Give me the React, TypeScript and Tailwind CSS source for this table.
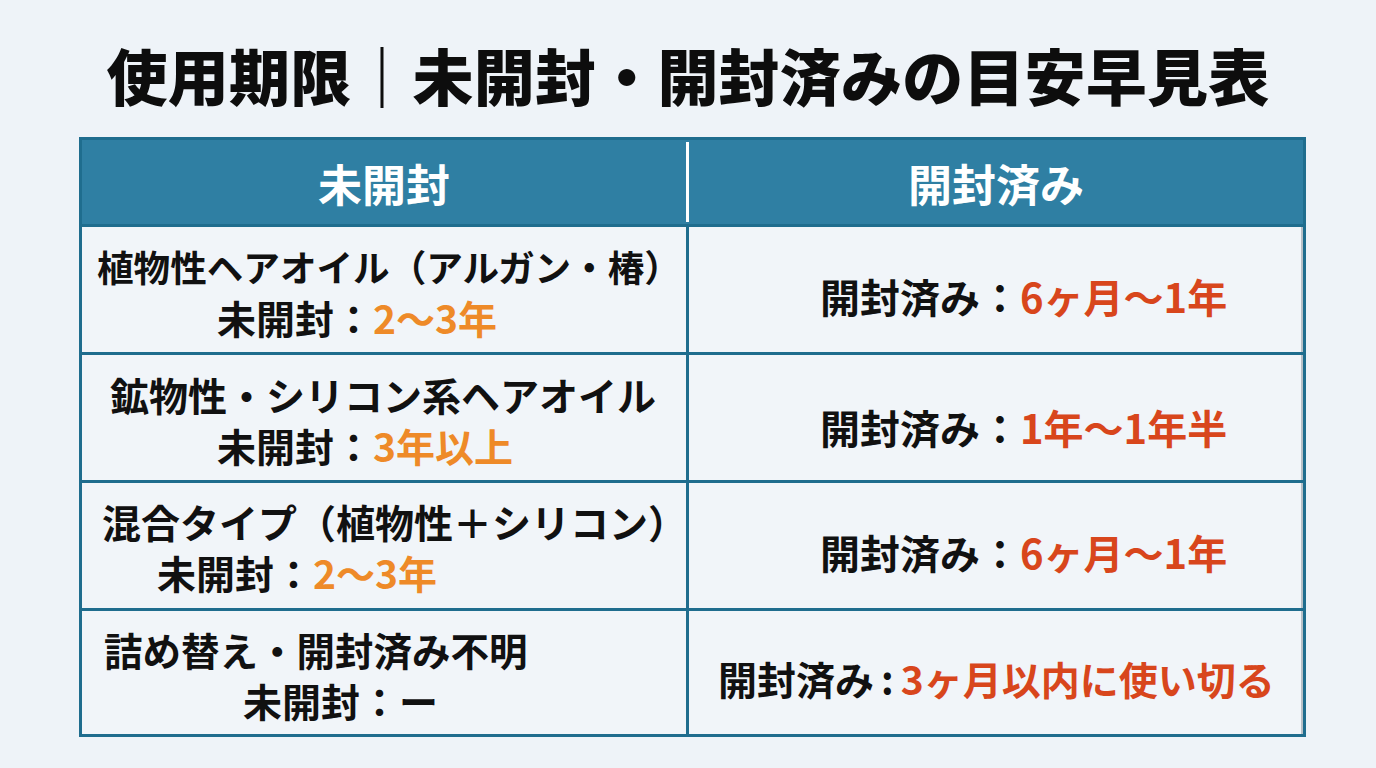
import React from "react";

const FONT = { fontFamily: '"Noto Sans CJK JP", "Noto Sans", sans-serif' };

export default function App() {
  return (
    <div className="min-h-[768px] w-[1376px] bg-[#eef3f8] text-[#111111]" style={FONT}>
      <h1 className="pt-[44px] text-center text-[61px] font-black leading-[61px] tracking-[0.2px] text-[#0d0d0d]">
        使用期限｜未開封・開封済みの目安早見表
      </h1>

      <div className="ml-[79px] mt-[32px] w-[1227px] border-[3px] border-[#1f6d8e]">
        {/* header */}
        <div className="flex h-[84px] bg-[#2f7fa3] text-white">
          <div className="flex w-[604px] items-center justify-center pt-[2px] text-[44px] font-bold leading-none">
            未開封
          </div>
          <div className="my-[2px] w-[3px] bg-white" />
          <div className="flex flex-1 items-center justify-center pt-[2px] text-[44px] font-bold leading-none">
            開封済み
          </div>
        </div>

        {/* body rows */}
        <div className="flex h-[128px] border-t-[3px] border-[#1f6d8e] bg-[#f1f5f9]">
          <div className="flex w-[607px] flex-col justify-center whitespace-nowrap border-r-[3px] border-[#1f6d8e] pt-[5px] font-bold leading-[51px]">
            <div className="pl-[15px] text-[36.6px]">植物性ヘアオイル（アルガン・椿）</div>
            <div className="pl-[135px] text-[39px]">
              未開封：<span className="text-[#ee8a28]">2〜3年</span>
            </div>
          </div>
          <div className="flex flex-1 items-center whitespace-nowrap border-r-2 border-[#b8c0c7] pl-[131px] pt-[12px] text-[40px] font-bold leading-none">
            開封済み：<span className="text-[#d8461c]">6ヶ月〜1年</span>
          </div>
        </div>

        <div className="flex h-[128px] border-t-[3px] border-[#1f6d8e] bg-[#f1f5f9]">
          <div className="flex w-[607px] flex-col justify-center whitespace-nowrap border-r-[3px] border-[#1f6d8e] pt-[5px] font-bold leading-[51px]">
            <div className="pl-[28px] text-[39px]">鉱物性・シリコン系ヘアオイル</div>
            <div className="pl-[135px] text-[39px]">
              未開封：<span className="text-[#ee8a28]">3年以上</span>
            </div>
          </div>
          <div className="flex flex-1 items-center whitespace-nowrap border-r-2 border-[#b8c0c7] pl-[131px] pt-[18px] text-[40px] font-bold leading-none">
            開封済み：<span className="text-[#d8461c]">1年〜1年半</span>
          </div>
        </div>

        <div className="flex h-[128px] border-t-[3px] border-[#1f6d8e] bg-[#f1f5f9]">
          <div className="flex w-[607px] flex-col justify-center whitespace-nowrap border-r-[3px] border-[#1f6d8e] pt-[3px] font-bold leading-[51px]">
            <div className="pl-[20px] text-[39px]">混合タイプ（植物性＋シリコン）</div>
            <div className="pl-[75px] text-[39px]">
              未開封：<span className="text-[#ee8a28]">2〜3年</span>
            </div>
          </div>
          <div className="flex flex-1 items-center whitespace-nowrap border-r-2 border-[#b8c0c7] pl-[131px] pt-[12px] text-[40px] font-bold leading-none">
            開封済み：<span className="text-[#d8461c]">6ヶ月〜1年</span>
          </div>
        </div>

        <div className="flex h-[126px] border-t-[3px] border-[#1f6d8e] bg-[#f1f5f9]">
          <div className="flex w-[607px] flex-col justify-center whitespace-nowrap border-r-[3px] border-[#1f6d8e] pt-[5px] font-bold leading-[51px]">
            <div className="pl-[22px] text-[38.5px]">詰め替え・開封済み不明</div>
            <div className="pl-[161px] text-[39px]">未開封：ー</div>
          </div>
          <div className="flex flex-1 items-center whitespace-nowrap border-r-2 border-[#b8c0c7] pl-[29px] pt-[12px] text-[39px] font-bold leading-none">
            開封済み<span className="px-[7px]">:</span>
            <span className="text-[#d8461c]">3ヶ月以内に使い切る</span>
          </div>
        </div>
      </div>
    </div>
  );
}
